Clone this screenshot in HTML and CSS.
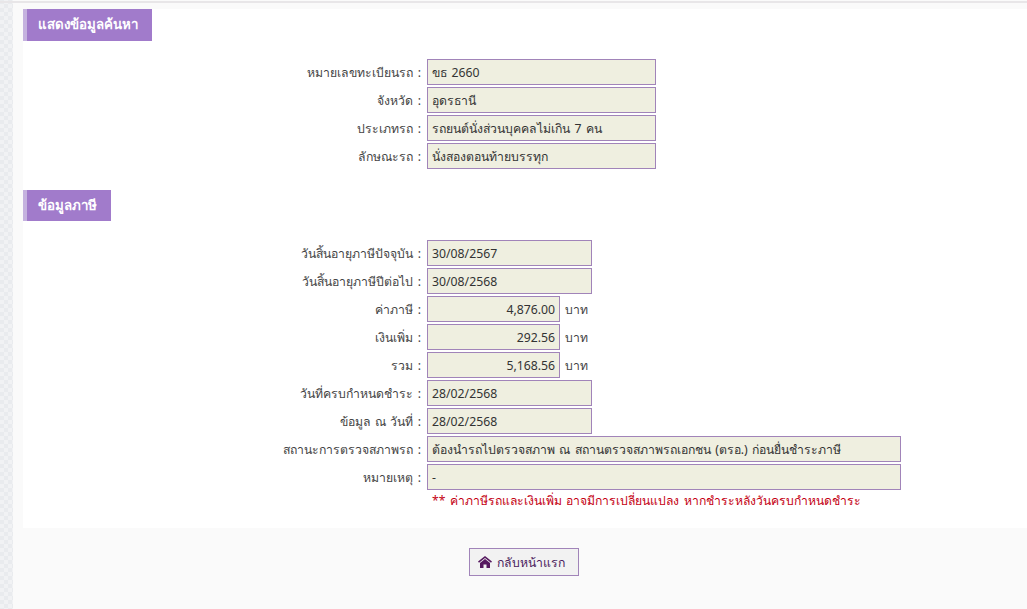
FILE: index.html
```html
<!DOCTYPE html>
<html lang="th">
<head>
<meta charset="utf-8">
<title>ข้อมูลภาษี</title>
<link rel="stylesheet" href="styles.css">
</head>
<body>
<div class="strip"></div>
<main class="page">
  <div class="panel">
    <h2 class="title">แสดงข้อมูลค้นหา</h2>
    <div class="form form-first">
      <div class="row"><span class="label">หมายเลขทะเบียนรถ :</span><span class="field w-l">ขธ 2660</span></div>
      <div class="row"><span class="label">จังหวัด :</span><span class="field w-l">อุดรธานี</span></div>
      <div class="row"><span class="label">ประเภทรถ :</span><span class="field w-l">รถยนต์นั่งส่วนบุคคลไม่เกิน 7 คน</span></div>
      <div class="row"><span class="label">ลักษณะรถ :</span><span class="field w-l">นั่งสองตอนท้ายบรรทุก</span></div>
    </div>
    <h2 class="title title-second">ข้อมูลภาษี</h2>
    <div class="form form-second">
      <div class="row"><span class="label">วันสิ้นอายุภาษีปัจจุบัน :</span><span class="field w-m">30/08/2567</span></div>
      <div class="row"><span class="label">วันสิ้นอายุภาษีปีต่อไป :</span><span class="field w-m">30/08/2568</span></div>
      <div class="row"><span class="label">ค่าภาษี :</span><span class="field w-s num">4,876.00</span><span class="unit">บาท</span></div>
      <div class="row"><span class="label">เงินเพิ่ม :</span><span class="field w-s num">292.56</span><span class="unit">บาท</span></div>
      <div class="row"><span class="label">รวม :</span><span class="field w-s num">5,168.56</span><span class="unit">บาท</span></div>
      <div class="row"><span class="label">วันที่ครบกำหนดชำระ :</span><span class="field w-m">28/02/2568</span></div>
      <div class="row"><span class="label">ข้อมูล ณ วันที่ :</span><span class="field w-m">28/02/2568</span></div>
      <div class="row"><span class="label">สถานะการตรวจสภาพรถ :</span><span class="field w-xl">ต้องนำรถไปตรวจสภาพ ณ สถานตรวจสภาพรถเอกชน (ตรอ.) ก่อนยื่นชำระภาษี</span></div>
      <div class="row"><span class="label">หมายเหตุ :</span><span class="field w-xl">-</span></div>
      <p class="note">** ค่าภาษีรถและเงินเพิ่ม อาจมีการเปลี่ยนแปลง หากชำระหลังวันครบกำหนดชำระ</p>
    </div>
  </div>
  <div class="actions">
    <a class="btn" href="#">
      <svg class="home" viewBox="0 0 14 12" width="14" height="12" aria-hidden="true"><path d="M7 0 L14 5.6 L13 6.8 L7 2 L1 6.8 L0 5.6 Z M7 3 L12 7 L12 12 L8.5 12 L8.5 8.5 L5.5 8.5 L5.5 12 L2 12 L2 7 Z"/></svg>
      <span>กลับหน้าแรก</span>
    </a>
  </div>
</main>
</body>
</html>
```
FILE: styles.css
```css
* { box-sizing: border-box; }
html, body { margin: 0; height: 100%; }
body {
  display: flex;
  height: 609px;
  overflow: hidden;
  background: #fafafa;
  font-family: "Noto Sans", "DejaVu Sans", sans-serif;
  font-size: 12.25px;
  word-spacing: 1.2px;
  color: #333;
}
.strip {
  width: 13px;
  flex: none;
  background-color: #e9ebee;
  background-image:
    linear-gradient(45deg, #f1f2f4 25%, transparent 25%, transparent 75%, #f1f2f4 75%),
    linear-gradient(45deg, #f1f2f4 25%, transparent 25%, transparent 75%, #f1f2f4 75%);
  background-size: 8px 8px;
  background-position: 0 0, 4px 4px;
}
.page {
  flex: 1;
  min-width: 0;
  padding: 9px 0 0 10px;
  position: relative;
}
.page::before {
  content: "";
  position: absolute;
  left: -13px; right: 0; top: 1px;
  height: 2px;
  background: #e8e6e8;
}
.panel {
  background: #fff;
  height: 519px;
}
.title {
  display: table;
  margin: 0;
  height: 32px;
  padding: 0 13.5px 0 11px;
  border-left: 4px solid #c5b2df;
  background: #a17bcb;
  color: #fff;
  font-size: 13.3px;
  font-weight: 700;
  line-height: 30px;
}
.form-first { margin-top: 17px; }
.title-second { height: 31px; margin-top: 20px; }
.form-second { margin-top: 18px; }
.row {
  display: flex;
  align-items: center;
  height: 28px;
}
.label {
  width: 404px;
  flex: none;
  text-align: right;
  padding: 1px 6px 0 0;
  color: #444;
}
.field {
  height: 26px;
  line-height: 26px;
  padding: 0 4px;
  border: 1px solid #a184b9;
  background: #efefe0;
  color: #333;
  white-space: nowrap;
  overflow: hidden;
}
.w-l { width: 229px; }
.w-m { width: 165px; }
.w-s { width: 133px; }
.w-xl { width: 474px; }
.num { text-align: right; }
.unit { margin-left: 5px; padding-top: 1px; color: #444; }
.note {
  margin: 2px 0 0 409px;
  color: #c40012;
  font-size: 12.18px;
  line-height: 16px;
}
.actions {
  display: flex;
  padding: 20px 0 0 446px;
}
.btn {
  display: flex;
  align-items: center;
  gap: 5px;
  width: 110px;
  height: 28px;
  padding-left: 8px;
  border: 1px solid #a184b9;
  background: #f2f2f2;
  color: #4a1a5c;
  text-decoration: none;
}
.home { fill: #56195f; flex: none; }
```
